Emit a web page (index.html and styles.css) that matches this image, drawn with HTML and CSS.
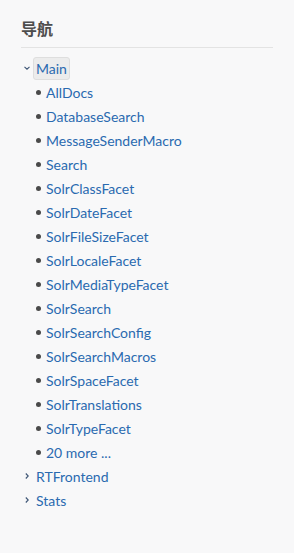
FILE: index.html
```html
<!DOCTYPE html>
<html lang="zh">
<head>
<meta charset="utf-8">
<link rel="stylesheet" href="styles.css">
</head>
<body>
<div class="panel">
  <h2 class="title">导航</h2>
  <ul class="tree">
    <li class="node open">
      <div class="row"><span class="toggle"><svg width="8" height="8" viewBox="0 0 8 8"><path d="M1.5 2.8 L4 5.2 L6.5 2.8" fill="none" stroke="currentColor" stroke-width="1.1"/></svg></span><a class="label current">Main</a></div>
      <ul class="children">
        <li><a>AllDocs</a></li>
        <li><a>DatabaseSearch</a></li>
        <li><a>MessageSenderMacro</a></li>
        <li><a>Search</a></li>
        <li><a>SolrClassFacet</a></li>
        <li><a>SolrDateFacet</a></li>
        <li><a>SolrFileSizeFacet</a></li>
        <li><a>SolrLocaleFacet</a></li>
        <li><a>SolrMediaTypeFacet</a></li>
        <li><a>SolrSearch</a></li>
        <li><a>SolrSearchConfig</a></li>
        <li><a>SolrSearchMacros</a></li>
        <li><a>SolrSpaceFacet</a></li>
        <li><a>SolrTranslations</a></li>
        <li><a>SolrTypeFacet</a></li>
        <li><a>20 more ...</a></li>
      </ul>
    </li>
    <li class="node">
      <div class="row"><span class="toggle"><svg width="8" height="8" viewBox="0 0 8 8"><path d="M2.8 1.5 L5.2 4 L2.8 6.5" fill="none" stroke="currentColor" stroke-width="1.1"/></svg></span><a class="label">RTFrontend</a></div>
    </li>
    <li class="node">
      <div class="row"><span class="toggle"><svg width="8" height="8" viewBox="0 0 8 8"><path d="M2.8 1.5 L5.2 4 L2.8 6.5" fill="none" stroke="currentColor" stroke-width="1.1"/></svg></span><a class="label">Stats</a></div>
    </li>
  </ul>
</div>
</body>
</html>
```
FILE: styles.css
```css
html, body {
  margin: 0;
  padding: 0;
  background: #f8f8f9;
}
body {
  font-family: Lato, "Noto Sans", "Noto Sans CJK SC", sans-serif;
  font-size: 14px;
  color: #333;
}
.panel {
  padding: 17px 21px 0 21px;
}
.title {
  margin: 0;
  font-family: "Noto Sans CJK SC", sans-serif;
  font-size: 16px;
  font-weight: 700;
  color: #4d4d4d;
  line-height: 22px;
  padding-bottom: 8px;
  border-bottom: 1px solid #e3e3e3;
}
.tree {
  list-style: none;
  margin: 8px 0 0 0;
  padding: 0;
}
.row {
  display: flex;
  align-items: center;
  height: 24px;
}
.toggle {
  width: 12px;
  display: flex;
  justify-content: center;
  color: #3d5575;
}
.label {
  color: #2a6ab0;
  padding: 1px 2px;
  line-height: 19px;
  border: 1px solid transparent;
  border-radius: 3px;
}
.label.current {
  background: #ececec;
  border-color: #dedede;
}
.children {
  list-style: none;
  margin: 0;
  padding: 0 0 0 14px;
}
.children li {
  display: flex;
  align-items: center;
  height: 24px;
}
.children li::before {
  content: "";
  width: 5px;
  height: 5px;
  border-radius: 50%;
  background: #4a4a4a;
  margin-left: 1px;
  margin-right: 5px;
}
.children a {
  color: #2a6ab0;
}
```
